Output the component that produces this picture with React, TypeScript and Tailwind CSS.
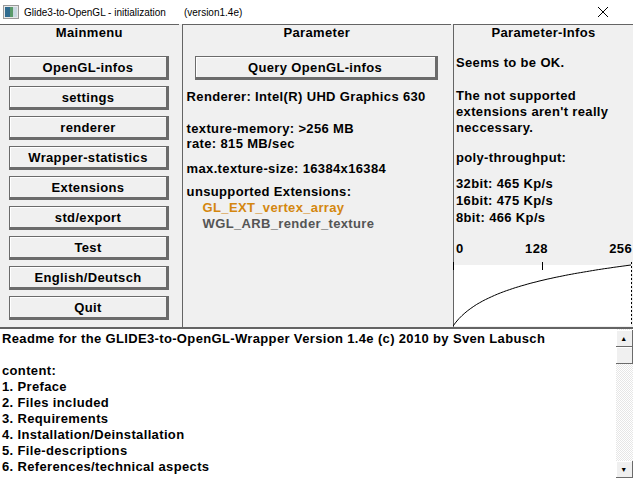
import React from "react";

// Glide3-to-OpenGL init dialog
const TXT = "font-['Liberation_Sans',Arial,sans-serif] font-bold text-[13px] leading-[16px] tracking-[0.35px] text-black";

const menu = [
  "OpenGL-infos",
  "settings",
  "renderer",
  "Wrapper-statistics",
  "Extensions",
  "std/export",
  "Test",
  "English/Deutsch",
  "Quit",
];

const readme = [
  "Readme for the GLIDE3-to-OpenGL-Wrapper Version 1.4e (c) 2010 by Sven Labusch",
  "\u00a0",
  "content:",
  "1. Preface",
  "2. Files included",
  "3. Requirements",
  "4. Installation/Deinstallation",
  "5. File-descriptions",
  "6. References/technical aspects",
];

function Btn({ label, className = "" }: { label: string; className?: string }) {
  return (
    <div
      className={`flex h-[24px] items-center justify-center border-t border-l border-r-[3px] border-b-[3px] border-[#6b6b6b] bg-[#f0f0f0] pt-[1px] shadow-[inset_1px_1px_0_#ffffff] ${className}`}
    >
      {label}
    </div>
  );
}

// throughput curve, log-shaped
function curve() {
  const pts: string[] = [];
  for (let i = 0; i <= 60; i++) {
    const t = i / 60;
    const f = Math.log(1 + 10 * t) / Math.log(11);
    pts.push(`${(t * 178).toFixed(1)},${(67 - f * 61).toFixed(1)}`);
  }
  return "M" + pts.join(" L");
}

function Chart() {
  return (
    <svg width="180" height="68" viewBox="0 0 180 68" className="block">
      <rect x="1" y="6" width="177" height="61" fill="#ffffff" />
      <path d={curve()} fill="none" stroke="#000" strokeWidth="1" />
      <line x1="0.5" y1="3" x2="0.5" y2="11" stroke="#000" />
      <line x1="89.5" y1="3" x2="89.5" y2="11" stroke="#000" />
      <line x1="178.5" y1="3" x2="178.5" y2="67" stroke="#000" strokeDasharray="2 2" />
    </svg>
  );
}

export default function App() {
  return (
    <div className="flex h-[478px] w-[633px] flex-col overflow-hidden bg-[#f0f0f0]">
      {/* title bar */}
      <div className="flex h-[24px] shrink-0 items-center bg-white font-['Liberation_Sans',Arial,sans-serif] text-[10px] text-black">
        <svg width="16" height="14" viewBox="0 0 16 14" className="ml-[3px]">
          <rect x="0.5" y="0.5" width="15" height="13" fill="#e8e8e8" stroke="#9a9a9a" />
          <rect x="2" y="2" width="5" height="10" fill="#2f6b8f" />
          <rect x="7" y="2" width="3" height="10" fill="#5a9a6a" />
          <rect x="10" y="2" width="4" height="10" fill="#c8d8e0" />
        </svg>
        <span className="ml-[5px]">Glide3-to-OpenGL - initialization</span>
        <span className="ml-[18px]">(version1.4e)</span>
        <svg width="12" height="12" viewBox="0 0 12 12" className="ml-auto mr-[24px]">
          <path d="M1 1 L11 11 M11 1 L1 11" stroke="#000" strokeWidth="1" />
        </svg>
      </div>

      {/* main columns */}
      <div className={`flex h-[303px] shrink-0 ${TXT}`}>
        <div className="flex w-[179px] flex-col border-t border-[#646464]">
          <div className="text-center">Mainmenu</div>
          <div className="ml-[9px] mt-[15px] flex w-[160px] flex-col gap-[6px]">
            {menu.map((m) => (
              <Btn key={m} label={m} />
            ))}
          </div>
        </div>

        <div className="ml-[3px] flex w-[270px] flex-col border-t border-l border-[#646464]">
          <div className="text-center">Parameter</div>
          <Btn label="Query OpenGL-infos" className="ml-[12px] mt-[15px] w-[243px]" />
          <div className="pl-[4px] leading-[15px]">
            <div className="mt-[9px]">Renderer: Intel(R) UHD Graphics 630</div>
            <div className="mt-[17px]">texture-memory: &gt;256 MB</div>
            <div>rate: 815 MB/sec</div>
            <div className="mt-[10px]">max.texture-size: 16384x16384</div>
            <div className="mt-[8px]">unsupported Extensions:</div>
            <div className="ml-[16px] mt-[1px] text-[#d4870f]">GL_EXT_vertex_array</div>
            <div className="ml-[16px] mt-[1px] text-[#555555]">WGL_ARB_render_texture</div>
          </div>
        </div>

        <div className="ml-[2px] flex flex-1 flex-col border-t border-l border-[#646464]">
          <div className="text-center">Parameter-Infos</div>
          <div className="pl-[2px]">
            <div className="mt-[14px]">Seems to be OK.</div>
            <div className="mt-[17px]">The not supported</div>
            <div>extensions aren't really</div>
            <div>neccessary.</div>
            <div className="mt-[14px]">poly-throughput:</div>
            <div className="mt-[10px] flex flex-col gap-[1px]">
              <div>32bit: 465 Kp/s</div>
              <div>16bit: 475 Kp/s</div>
              <div>8bit: 466 Kp/s</div>
            </div>
          </div>
          <div className="mt-auto">
            <div className="flex w-[178px] justify-between pl-[2px]">
              <span>0</span>
              <span>128</span>
              <span>256</span>
            </div>
            <div className="-ml-[1px] mt-[2px]">
              <Chart />
            </div>
          </div>
        </div>
      </div>

      {/* readme box */}
      <div className={`flex flex-1 border-t-2 border-[#646464] bg-white ${TXT}`}>
        <div className="flex-1 overflow-hidden whitespace-nowrap pl-[2px] pt-[2px]">
          {readme.map((l, i) => (
            <div key={i}>{l}</div>
          ))}
        </div>
        <div className="flex w-[17px] flex-col bg-[repeating-conic-gradient(#e6e6e6_0_25%,#ffffff_0_50%)] bg-[length:2px_2px] pt-[1px]">
          <div className="flex h-[17px] items-center justify-center border-r border-b border-[#6b6b6b] bg-[#f0f0f0] shadow-[inset_1px_1px_0_#ffffff] text-[7px] leading-none">
            ▲
          </div>
          <div className="h-[17px] border-r border-b border-[#6b6b6b] bg-[#f0f0f0] shadow-[inset_1px_1px_0_#ffffff]" />
          <div className="flex-1" />
          <div className="flex h-[17px] items-center justify-center border-r border-b border-[#6b6b6b] bg-[#f0f0f0] shadow-[inset_1px_1px_0_#ffffff] text-[7px] leading-none">
            ▼
          </div>
        </div>
      </div>
    </div>
  );
}
